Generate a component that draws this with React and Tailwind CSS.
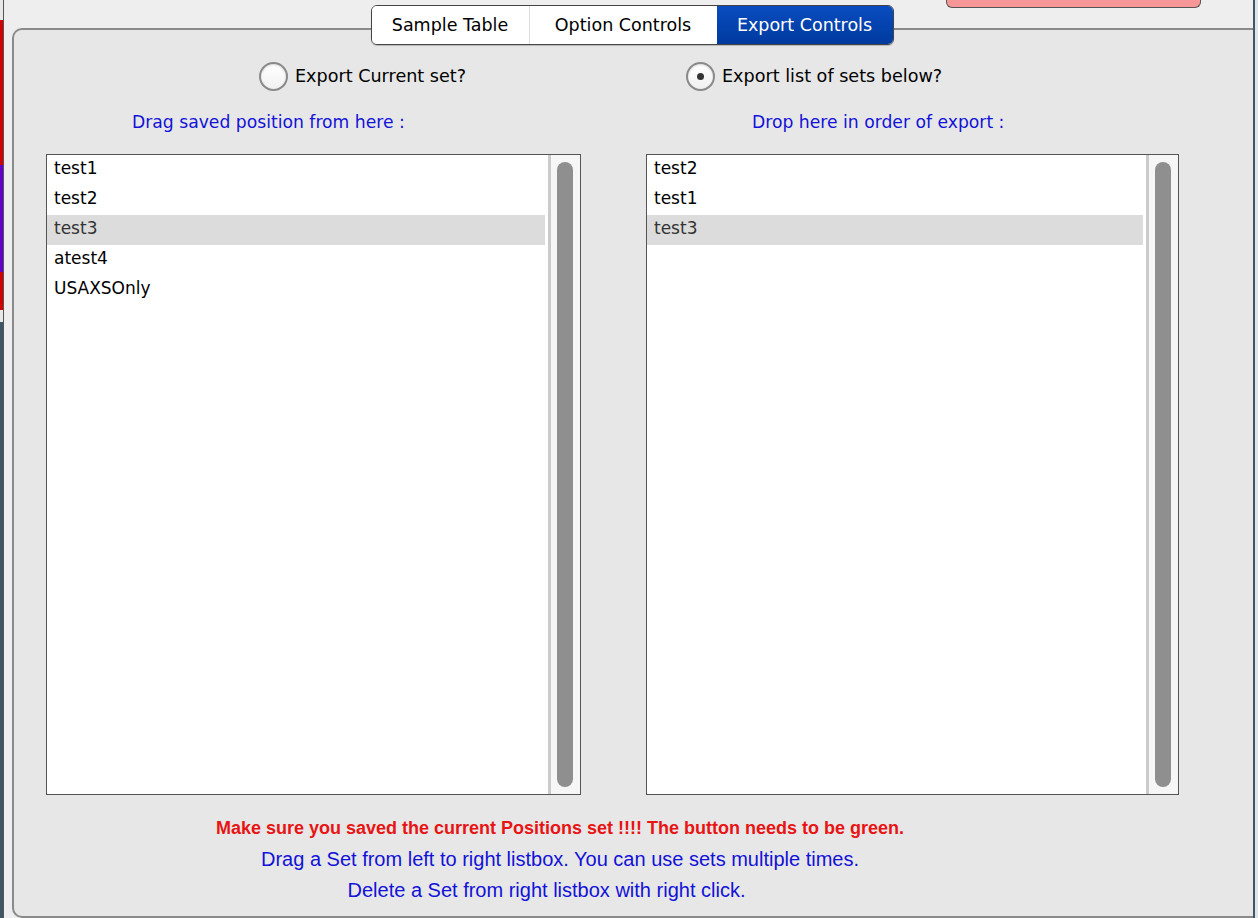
import React from 'react';

const leftItems = ['test1', 'test2', 'test3', 'atest4', 'USAXSOnly'];
const rightItems = ['test2', 'test1', 'test3'];

const Radio = ({ checked, label }) => (
  <div className="flex items-center gap-[7px] h-[30px]">
    <div className="w-[29px] h-[29px] rounded-full border-2 border-[#8a8a8a] bg-gradient-to-b from-white to-[#f1f1f1] shadow-[inset_0_1px_2px_rgba(0,0,0,0.15)] flex items-center justify-center">
      {checked && <div className="w-[7px] h-[7px] rounded-full bg-[#333]" />}
    </div>
    <span className="text-[17.6px] text-black">{label}</span>
  </div>
);

const ListBox = ({ items, selected }) => (
  <div className="h-[641px] border border-[#555] bg-white flex">
    <div className="flex-1 pr-[3px]">
      {items.map((it) => (
        <div
          key={it}
          className={
            'h-[30px] pl-[7px] pb-[3px] flex items-center text-[17px] ' +
            (it === selected ? 'bg-[#dcdcdc] text-[#333]' : 'text-black')
          }
        >
          {it}
        </div>
      ))}
    </div>
    <div className="w-[32px] border-l-[3px] border-[#cbcbcb] bg-[#f6f6f6] py-[7px] pl-[6px]">
      <div className="w-[16px] h-full rounded-full bg-[#8f8f8f]" />
    </div>
  </div>
);

export default function App() {
  return (
    <div className="flex h-[918px] w-[1258px] overflow-hidden bg-[#eeeeee] font-['DejaVu_Sans',sans-serif]">
      {/* window edge on the left */}
      <div className="w-[3px] flex flex-col">
        <div className="h-[20px] bg-[#e8e8e8]" />
        <div className="h-[145px] bg-[#d40000]" />
        <div className="h-[107px] bg-[#6600cc]" />
        <div className="h-[38px] bg-[#d40000]" />
        <div className="h-[12px] bg-[#e8e8e8]" />
        <div className="flex-1 bg-[#3e5766]" />
      </div>
      <div className="w-[1px] bg-[#555]" />

      <div className="flex-1 flex flex-col">
        <div className="h-[28px] shrink-0">
          <div className="ml-[942px] w-[255px] h-[8px] bg-[#f79696] border-x border-b border-[#555] rounded-b-[6px]" />
        </div>

        <div className="flex-1 ml-[8px] border-l-2 border-t-2 border-b-2 border-[#8a8a8a] rounded-tl-[10px] rounded-bl-[10px] bg-[#e7e7e7] flex flex-col">
          {/* tabs */}
          <div className="-mt-[25px] flex justify-center pr-[3px]">
            <div className="flex h-[40px] border border-[#444] rounded-[6px] overflow-hidden text-[17.5px] shadow-[0_1px_1px_rgba(0,0,0,0.2)]">
              <div className="w-[158px] bg-white flex items-center justify-center text-black border-r border-[#dddddd]">
                Sample Table
              </div>
              <div className="w-[187px] bg-white flex items-center justify-center text-black">
                Option Controls
              </div>
              <div className="w-[176px] bg-gradient-to-b from-[#0a4cc0] to-[#003a9e] flex items-center justify-center text-white">
                Export Controls
              </div>
            </div>
          </div>

          {/* columns */}
          <div className="mt-[16px] flex pl-[32px] gap-[65px]">
            <div className="w-[535px] flex flex-col">
              <div className="pl-[213px]">
                <Radio label="Export Current set?" />
              </div>
              <div className="mt-[19px] pl-[86px] h-[24px] leading-[24px] text-[17.2px] text-[#1212d8]">
                Drag saved position from here :
              </div>
              <div className="mt-[20px]">
                <ListBox items={leftItems} selected="test3" />
              </div>
            </div>
            <div className="w-[533px] flex flex-col">
              <div className="pl-[40px]">
                <Radio checked label="Export list of sets below?" />
              </div>
              <div className="mt-[19px] pl-[106px] h-[24px] leading-[24px] text-[17.2px] text-[#1212d8]">
                Drop here in order of export :
              </div>
              <div className="mt-[20px]">
                <ListBox items={rightItems} selected="test3" />
              </div>
            </div>
          </div>

          {/* notes */}
          <div className="mt-[18px] w-[1092px] text-center font-['Liberation_Sans',Arial,sans-serif] leading-[31px]">
            <div className="text-[18px] font-bold text-[#e81414]">
              Make sure you saved the current Positions set !!!! The button needs to be green.
            </div>
            <div className="text-[20px] text-[#1212d8]">
              Drag a Set from left to right listbox. You can use sets multiple times.
            </div>
            <div className="text-[20px] text-[#1212d8] pr-[27px]">
              Delete a Set from right listbox with right click.
            </div>
          </div>
        </div>
      </div>

      {/* window edge on the right */}
      <div className="w-[2px] bg-[#3e5766]" />
      <div className="w-[3px] bg-[#dfe4e6]" />
    </div>
  );
}
